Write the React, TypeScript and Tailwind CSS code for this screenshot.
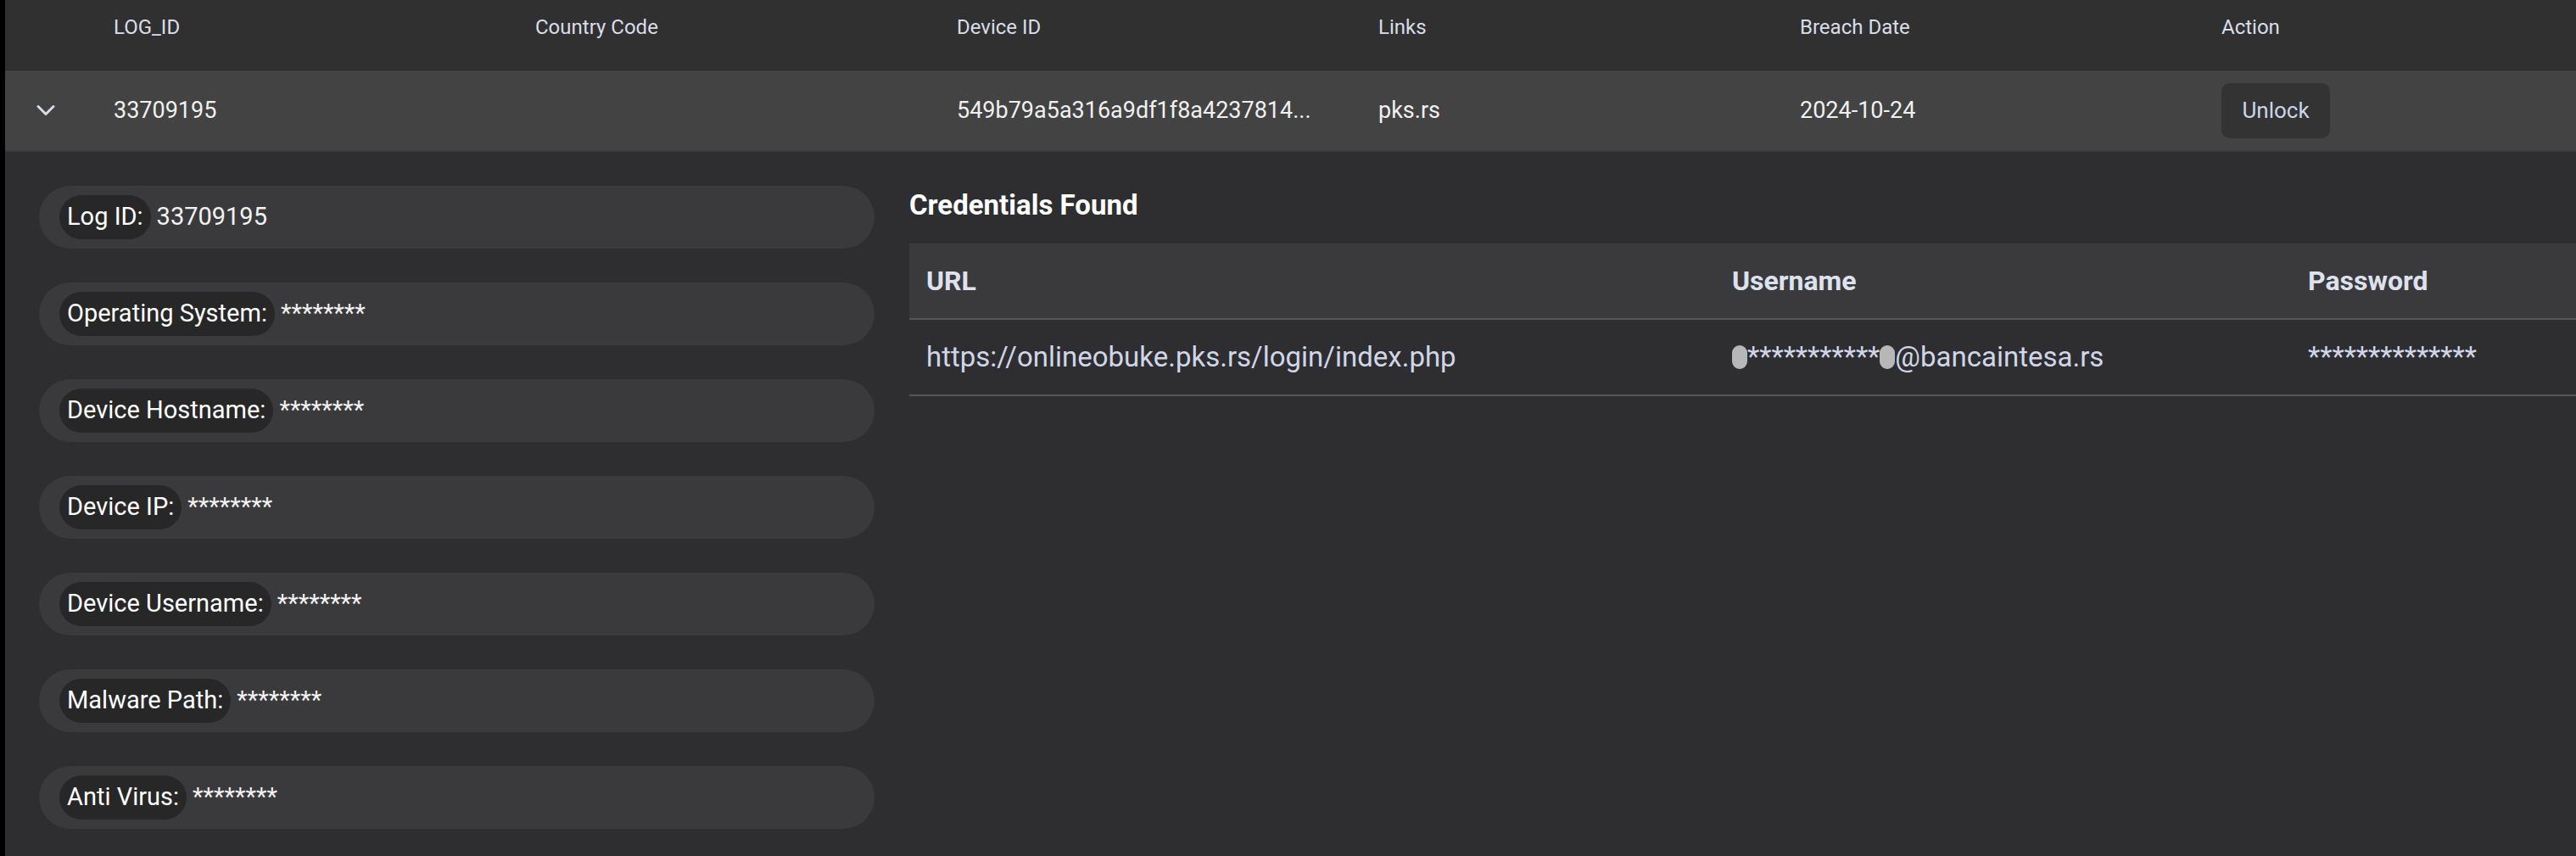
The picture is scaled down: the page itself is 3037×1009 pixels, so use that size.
import React from 'react';
import { ChevronDown } from 'lucide-react';

const columns = ['LOG_ID', 'Country Code', 'Device ID', 'Links', 'Breach Date', 'Action'];

const details = [
  { label: 'Log ID:', value: '33709195' },
  { label: 'Operating System:', value: '********' },
  { label: 'Device Hostname:', value: '********' },
  { label: 'Device IP:', value: '********' },
  { label: 'Device Username:', value: '********' },
  { label: 'Malware Path:', value: '********' },
  { label: 'Anti Virus:', value: '********' },
];

const gridCols = 'grid grid-cols-[128px_497px_497px_497px_497px_497px_1fr]';

const Blob = () => (
  <span className="inline-block w-[18px] h-[28px] rounded-full bg-[#b7b7b7] align-middle" />
);

const App = () => {
  return (
    <div className="min-h-screen flex bg-[#2e2e30] font-['Roboto',sans-serif]">
      {/* left edge */}
      <div className="w-[6px] shrink-0 bg-black" />

      <div className="flex-1 min-w-0">
        {/* Header */}
        <div className={`${gridCols} items-start pt-[18px] h-[83px] bg-[#303030] border-b border-[#282828] text-[24px] leading-[28px] text-[#d8dde9]`}>
          <div />
          {columns.map((c) => (
            <div key={c}>{c}</div>
          ))}
        </div>

        {/* Row */}
        <div className={`${gridCols} items-center h-[96px] bg-[#434343] border-b-2 border-[#3a3a3a] text-[27px] text-[#f0f0f0]`}>
          <div className="pl-[30px] flex items-center">
            <ChevronDown size={36} strokeWidth={2} className="text-[#d8dce8]" />
          </div>
          <div>33709195</div>
          <div />
          <div>549b79a5a316a9df1f8a4237814...</div>
          <div>pks.rs</div>
          <div>2024-10-24</div>
          <div>
            <button className="w-[128px] h-[65px] rounded-[10px] bg-[#333333] text-[26px] text-[#cdd5e8]">
              Unlock
            </button>
          </div>
        </div>

        {/* Expanded */}
        <div className="flex gap-[41px] pl-[40px] pt-[40px] pb-[32px]">
          <div className="w-[985px] shrink-0 flex flex-col gap-[40px]">
            {details.map((d) => (
              <div key={d.label} className="h-[74px] rounded-full bg-[#3a3a3c] flex items-center pl-[24px]">
                <span className="h-[52px] rounded-full bg-[#272727] px-[9px] flex items-center text-[29px] text-white">
                  {d.label}
                </span>
                <span className="ml-[7px] text-[29px] text-[#f2f2f2]">{d.value}</span>
              </div>
            ))}
          </div>

          <div className="flex-1 min-w-0">
            <h2 className="mt-[4px] text-[33px] leading-[38px] font-bold text-white">Credentials Found</h2>
            <div className="mt-[26px]">
              <div className="grid grid-cols-[950px_679px_1fr] items-center h-[90px] bg-[#3a3a3c] border-b-2 border-[#555555] text-[32px] font-bold text-[#dde2ee]">
                <div className="pl-[20px]">URL</div>
                <div className="pl-[20px]">Username</div>
                <div className="pl-[20px]">Password</div>
              </div>
              <div className="grid grid-cols-[950px_679px_1fr] items-center h-[90px] border-b-2 border-[#555555] text-[33px] text-[#cfd6e8]">
                <div className="pl-[20px]">https://onlineobuke.pks.rs/login/index.php</div>
                <div className="pl-[20px] flex items-center">
                  <Blob />
                  <span>***********</span>
                  <Blob />
                  <span>@bancaintesa.rs</span>
                </div>
                <div className="pl-[20px]">**************</div>
              </div>
            </div>
          </div>
        </div>
      </div>
    </div>
  );
};

export default App;
